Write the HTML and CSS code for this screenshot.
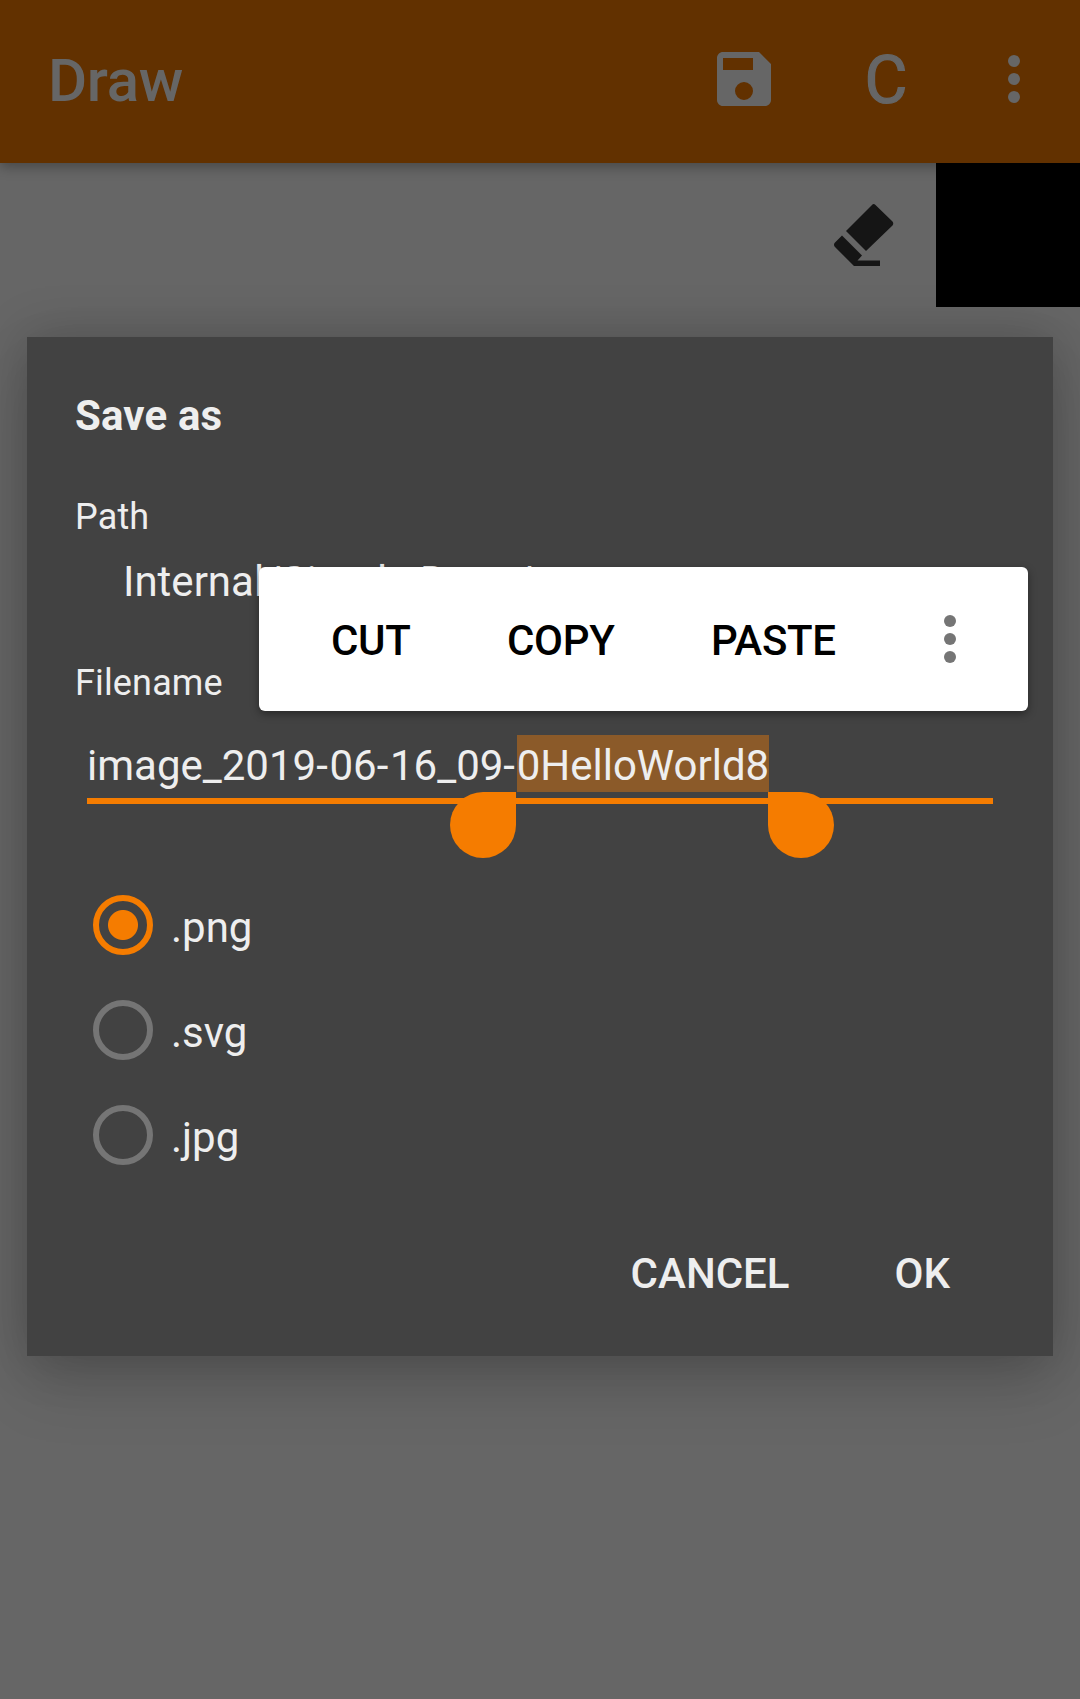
FILE: index.html
```html
<!DOCTYPE html>
<html lang="en">
<head>
<meta charset="utf-8">
<title>Draw</title>
<link rel="stylesheet" href="styles.css">
</head>
<body>
<div class="screen">
  <header class="app-bar">
    <h1 class="app-title">Draw</h1>
    <svg class="action save" viewBox="0 0 24 24"><path fill-rule="evenodd" d="M17 3H5c-1.110 0-2 .9-2 2v14c0 1.100.890 2 2 2h14c1.100 0 2-.9 2-2V7zM12 19a3 3 0 1 1 0-6 3 3 0 0 1 0 6zM15 9H5V5h10z"/></svg>
    <span class="action-letter">C</span>
    <svg class="action more" viewBox="0 0 24 24"><circle cx="12" cy="6" r="2"/><circle cx="12" cy="12" r="2"/><circle cx="12" cy="18" r="2"/></svg>
  </header>
  <div class="tools">
    <svg class="eraser" viewBox="0 0 144 144"><path d="M80 42Q81.500 40 83.500 42L100.500 58.500Q102 60.500 100.500 62.500L74 88 54 68zM50 72.500 70 92.500 65.500 97.500H88V103H62L43 84Q41 81.500 43 79.500z"/></svg>
    <div class="swatch"></div>
  </div>
  <main class="dialog">
    <h2 class="dialog-title">Save as</h2>
    <div class="label">Path</div>
    <div class="path">Internal/Simple Draw/</div>
    <div class="label filename-label">Filename</div>
    <div class="field"><span>image_2019<span class="dash">-</span>06<span class="dash">-</span>16_09<span class="dash">-</span></span><span class="selected">0HelloWorld8<i class="handle start"></i><i class="handle end"></i></span></div>
    <div class="options">
      <div class="option"><span class="radio checked"></span><span>.png</span></div>
      <div class="option"><span class="radio"></span><span>.svg</span></div>
      <div class="option"><span class="radio"></span><span>.jpg</span></div>
    </div>
    <div class="buttons"><span>CANCEL</span><span>OK</span></div>
    <div class="popup">
      <span>CUT</span><span>COPY</span><span>PASTE</span>
      <svg class="popup-more" viewBox="0 0 24 24"><circle cx="12" cy="6" r="2"/><circle cx="12" cy="12" r="2"/><circle cx="12" cy="18" r="2"/></svg>
    </div>
  </main>
</div>
</body>
</html>
```
FILE: styles.css
```css
* { box-sizing: border-box; }
body { margin: 0; font-family: Roboto, sans-serif; }
.screen { height: 1699px; background: #666; overflow: hidden; }
.app-bar {
  position: relative;
  z-index: 1;
  display: flex;
  height: 163px;
  padding-left: 48px;
  background: #623100;
  color: #666;
  box-shadow: 0 4px 12px rgba(0, 0, 0, .3);
}
.app-title { flex: 1; margin: 0; padding-top: 46px; font-size: 60px; line-height: 70px; font-weight: 500; letter-spacing: -.3px; }
.action { width: 72px; height: 72px; margin-top: 43px; fill: #666; }
.action-letter { width: 144px; margin-left: 34px; padding-top: 42px; text-align: center; font-size: 66px; line-height: 78px; -webkit-text-stroke: 1.2px #666; }
.more { margin-left: 20px; margin-right: 30px; }
.tools { display: flex; justify-content: flex-end; height: 174px; position: relative; z-index: 2; }
.eraser { width: 144px; height: 144px; fill: #151515; }
.swatch { width: 144px; height: 144px; background: #000; }
.dialog {
  position: relative;
  display: flex;
  flex-direction: column;
  width: 1026px;
  height: 1019px;
  margin: 0 27px;
  padding: 54px 48px 0;
  background: #424242;
  color: #eee;
  font-size: 42px;
  box-shadow: 0 0 50px rgba(0, 0, 0, .2), 0 30px 60px rgba(0, 0, 0, .14);
}
.dialog-title { margin: 0; font-size: 42px; line-height: 50px; font-weight: 700; letter-spacing: .15px; }
.label { margin-top: 55px; font-size: 36px; line-height: 42px; letter-spacing: .15px; }
.path { margin-top: 19px; padding-left: 48px; line-height: 50px; }
.filename-label { margin-top: 55px; }
.field {
  display: flex;
  height: 69px;
  margin: 31px 12px 0;
  border-bottom: 6px solid #f57c00;
  line-height: 61px;
  white-space: nowrap;
}
.dash { letter-spacing: 1.7px; }
.selected { position: relative; height: 57px; background: #8b5a29; }
.handle { position: absolute; top: 57px; width: 66px; height: 66px; background: #f57c00; }
.start { right: calc(100% + 1px); border-radius: 33px 0 33px 33px; }
.end { left: calc(100% - 1px); border-radius: 0 33px 33px 33px; }
.options { margin: 91px 0 0 18px; }
.option { display: flex; gap: 18px; height: 105px; line-height: 66px; }
.radio { width: 60px; height: 60px; border: 6px solid #757575; border-radius: 50%; }
.checked { border-color: #f57c00; background: radial-gradient(circle, #f57c00 14.500px, transparent 15.500px); }
.buttons { display: flex; justify-content: flex-end; gap: 105px; padding-right: 55px; margin-top: 39px; line-height: 50px; font-weight: 500; }
.popup {
  position: absolute;
  left: 232px;
  top: 230px;
  display: flex;
  align-items: center;
  width: 769px;
  height: 144px;
  padding: 2px 0 0 72px;
  gap: 96.400px;
  border-radius: 6px;
  background: #fff;
  color: #000;
  font-weight: 500;
  letter-spacing: -.3px;
  box-shadow: 0 3px 9px rgba(0, 0, 0, .4);
}
.popup-more { width: 72px; height: 72px; margin: -2px 0 0 -18px; fill: #757575; }
```
